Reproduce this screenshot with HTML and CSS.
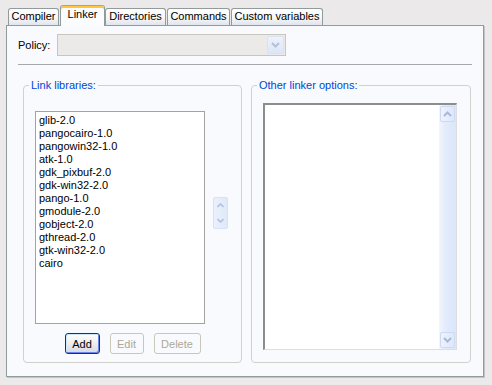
FILE: index.html
```html
<!DOCTYPE html>
<html lang="en">
<head>
    <meta charset="UTF-8">
    <meta name="viewport" content="width=device-width, initial-scale=1.0">
    <title>Linker options</title>
    <link rel="stylesheet" href="styles.css">
</head>
<body>
    <div class="tabs">
        <div class="tab tab-compiler">Compiler</div>
        <div class="tab tab-linker active">Linker</div>
        <div class="tab tab-dirs">Directories</div>
        <div class="tab tab-commands">Commands</div>
        <div class="tab tab-custom">Custom variables</div>
    </div>

    <div class="page">
        <div class="policy-row">
            <span class="policy-label">Policy:</span>
            <div class="select">
                <span class="select-btn">
                    <svg width="9" height="6" viewBox="0 0 9 6"><polyline points="1,1 4.5,4.5 8,1" fill="none" stroke="#b5c1da" stroke-width="2"/></svg>
                </span>
            </div>
        </div>

        <div class="separator"></div>

        <div class="groups">
            <div class="group group-libs">
                <span class="group-title">Link libraries:</span>
                <div class="libs-row">
                    <ul class="listbox">
                        <li>glib-2.0</li>
                        <li>pangocairo-1.0</li>
                        <li>pangowin32-1.0</li>
                        <li>atk-1.0</li>
                        <li>gdk_pixbuf-2.0</li>
                        <li>gdk-win32-2.0</li>
                        <li>pango-1.0</li>
                        <li>gmodule-2.0</li>
                        <li>gobject-2.0</li>
                        <li>gthread-2.0</li>
                        <li>gtk-win32-2.0</li>
                        <li>cairo</li>
                    </ul>
                    <div class="spinner">
                        <span class="spin-half">
                            <svg width="7" height="5" viewBox="0 0 7 5"><polyline points="0.5,4 3.5,1 6.5,4" fill="none" stroke="#b3c1dc" stroke-width="1.6"/></svg>
                        </span>
                        <span class="spin-half">
                            <svg width="7" height="5" viewBox="0 0 7 5"><polyline points="0.5,1 3.5,4 6.5,1" fill="none" stroke="#b3c1dc" stroke-width="1.6"/></svg>
                        </span>
                    </div>
                </div>
                <div class="buttons">
                    <button class="btn btn-default">Add</button>
                    <button class="btn btn-edit" disabled>Edit</button>
                    <button class="btn btn-delete" disabled>Delete</button>
                </div>
            </div>

            <div class="group group-other">
                <span class="group-title">Other linker options:</span>
                <div class="textarea">
                    <div class="scrollbar">
                        <span class="scroll-btn">
                            <svg width="9" height="6" viewBox="0 0 9 6"><polyline points="1,5 4.5,1.5 8,5" fill="none" stroke="#a9b8d8" stroke-width="2"/></svg>
                        </span>
                        <span class="scroll-btn">
                            <svg width="9" height="6" viewBox="0 0 9 6"><polyline points="1,1 4.5,4.5 8,1" fill="none" stroke="#a9b8d8" stroke-width="2"/></svg>
                        </span>
                    </div>
                </div>
            </div>
        </div>
    </div>
</body>
</html>
```

FILE: styles.css
```css
* {
    box-sizing: border-box;
}

body {
    margin: 0;
    width: 492px;
    height: 385px;
    font-family: "Liberation Sans", Arial, sans-serif;
    font-size: 11px;
    color: #000;
    background-color: #ece9eb;
    overflow: hidden;
}

/* tab strip */
.tabs {
    display: flex;
    align-items: flex-end;
    height: 25px;
    padding-left: 8px;
}

.tab {
    height: 17px;
    margin-right: 1px;
    border: 1px solid #919b9c;
    border-bottom: none;
    border-radius: 3px 3px 0 0;
    background: linear-gradient(#ffffff 0%, #f7f7f5 55%, #dfe4ee 100%);
    line-height: 15px;
    text-align: center;
    white-space: nowrap;
}

.tab.active {
    position: relative;
    z-index: 1;
    height: 21px;
    margin-bottom: -1px;
    margin-right: 0;
    border-top: 1px solid #e3983a;
    box-shadow: inset 0 2px 0 #ffc83c;
    background: #fbfcfe;
    line-height: 16px;
}

.tab-compiler { width: 51px; }
.tab-linker { width: 45px; }
.tab-dirs { width: 61px; }
.tab-commands { width: 63px; }
.tab-custom { width: 92px; }

/* tab page */
.page {
    width: 478px;
    height: 352px;
    margin-left: 6px;
    padding: 8px 10px 0 11px;
    border: 1px solid #919b9c;
    background-color: #f9fafd;
    box-shadow: 1px 1px 0 #c4c4c8;
}

.policy-row {
    display: flex;
    align-items: center;
    height: 22px;
}

.policy-label {
    width: 39px;
}

.select {
    display: flex;
    justify-content: flex-end;
    width: 229px;
    height: 22px;
    padding: 1px;
    border: 1px solid #c9c7ba;
    background-color: #ebeae8;
}

.select-btn {
    display: flex;
    align-items: center;
    justify-content: center;
    width: 17px;
    height: 18px;
    border: 1px solid #d9e2f4;
    border-radius: 2px;
    background: linear-gradient(#edf2fb, #dde6f6);
}

.separator {
    width: 454px;
    height: 1px;
    margin-top: 8px;
    background-color: #a7a6aa;
}

/* group boxes */
.groups {
    display: flex;
    gap: 9px;
    margin-top: 20px;
    margin-left: 5px;
}

.group {
    display: flex;
    flex-direction: column;
    height: 278px;
    padding: 0 11px;
    border: 1px solid #d0d0cc;
    border-radius: 4px;
}

.group-libs { width: 219px; }
.group-other { width: 220px; }

.group-title {
    align-self: flex-start;
    margin: -7px 0 0 -6px;
    padding: 0 2px;
    line-height: 13px;
    color: #0046d5;
    background-color: #f9fafd;
}

.libs-row {
    display: flex;
    margin-top: 19px;
}

.listbox {
    width: 170px;
    height: 213px;
    margin: 0;
    padding: 2px 3px;
    list-style: none;
    border: 1px solid #a3a3a3;
    background-color: #fff;
    line-height: 13px;
}

.spinner {
    display: flex;
    flex-direction: column;
    width: 15px;
    height: 32px;
    margin: 86px 0 0 8px;
    border: 1px solid #d6e2f7;
    border-radius: 2px;
    background: linear-gradient(to right, #eaf0fc, #e0e9fa);
}

.spin-half {
    display: flex;
    flex: 1;
    align-items: center;
    justify-content: center;
}

.buttons {
    display: flex;
    justify-content: center;
    gap: 10px;
    margin-top: 9px;
}

.btn {
    height: 21px;
    padding: 0;
    font-family: inherit;
    font-size: 11px;
    border-radius: 3px;
}

.btn-default {
    width: 35px;
    color: #000;
    border: 1px solid #003c74;
    background: linear-gradient(#ffffff 0%, #f0f0ee 45%, #d3d9e6 100%);
    box-shadow: inset 1px 1px 0 #cee7ff, inset -1px -1px 0 #6982ee;
}

.btn:disabled {
    color: #aca899;
    border: 1px solid #c9c7ba;
    background-color: #f9fafd;
}

.btn-edit { width: 34px; }
.btn-delete { width: 47px; }

.textarea {
    display: flex;
    justify-content: flex-end;
    width: 194px;
    height: 247px;
    margin-top: 11px;
    border-top: 2px solid #8d8d8d;
    border-left: 2px solid #8d8d8d;
    border-right: 1px solid #dedede;
    border-bottom: 1px solid #dedede;
    background-color: #fff;
}

.scrollbar {
    display: flex;
    flex-direction: column;
    justify-content: space-between;
    width: 17px;
    height: 100%;
    background: linear-gradient(to right, #f1f5fe, #e2ebfb 40%, #dbe6fb 100%);
}

.scroll-btn {
    display: flex;
    align-items: center;
    justify-content: center;
    width: 15px;
    height: 16px;
    margin: 1px;
    border: 1px solid #cbdaf5;
    border-radius: 2px;
    background: linear-gradient(to right, #eef3fd, #dde7fa);
}
```
